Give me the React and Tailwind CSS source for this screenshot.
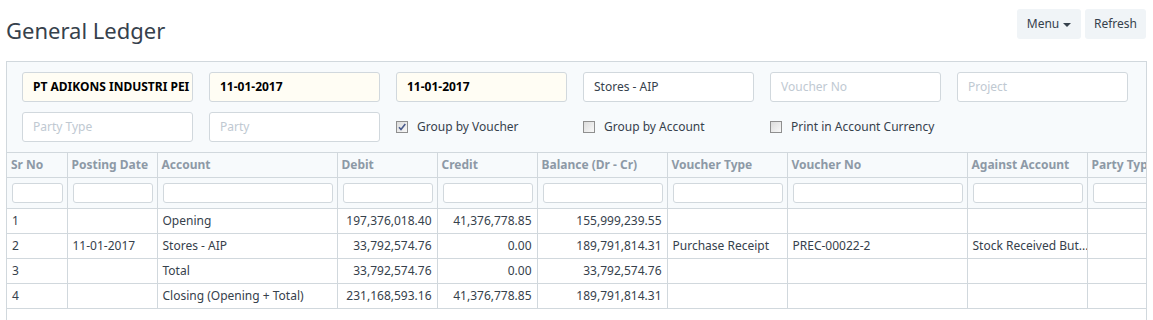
import { Fragment } from 'react';

const columns = [
  { label: 'Sr No', width: 60 },
  { label: 'Posting Date', width: 90 },
  { label: 'Account', width: 180 },
  { label: 'Debit', width: 100, right: true },
  { label: 'Credit', width: 100, right: true },
  { label: 'Balance (Dr - Cr)', width: 130, right: true },
  { label: 'Voucher Type', width: 120 },
  { label: 'Voucher No', width: 180 },
  { label: 'Against Account', width: 120 },
  { label: 'Party Type', width: 120 },
];

const rows = [
  ['1', '', 'Opening', '197,376,018.40', '41,376,778.85', '155,999,239.55', '', '', '', ''],
  ['2', '11-01-2017', 'Stores - AIP', '33,792,574.76', '0.00', '189,791,814.31', 'Purchase Receipt', 'PREC-00022-2', 'Stock Received But...', ''],
  ['3', '', 'Total', '33,792,574.76', '0.00', '33,792,574.76', '', '', '', ''],
  ['4', '', 'Closing (Opening + Total)', '231,168,593.16', '41,376,778.85', '189,791,814.31', '', '', '', ''],
];

function Field({ value, placeholder, filled }) {
  return (
    <div
      className={`flex h-[30px] w-[171px] items-center overflow-hidden whitespace-nowrap rounded-[3px] border border-[#d1d8dd] px-[10px] text-[12px] ${
        filled ? 'bg-[#fffdf4] font-bold text-[#000]' : 'bg-white'
      }`}
    >
      {value ? (
        <span className={filled ? '' : 'text-[#36414c]'}>{value}</span>
      ) : (
        <span className="text-[#c0c9d2]">{placeholder}</span>
      )}
    </div>
  );
}

function Check({ label, checked }) {
  return (
    <div className="flex h-[30px] w-[171px] items-center text-[12px] text-[#36414c]">
      <span className="relative mr-[9px] flex h-[12px] w-[12px] items-center justify-center border border-[#8f8f8f] bg-gradient-to-br from-[#dcdcdc] to-[#f8f8f8]">
        {checked && (
          <svg viewBox="0 0 10 10" className="h-[10px] w-[10px]">
            <path d="M2 5.2 L4 7.5 L8.3 2" fill="none" stroke="#4a5b8c" strokeWidth="1.6" />
          </svg>
        )}
      </span>
      {label}
    </div>
  );
}

export default function App() {
  return (
    <div className="h-[320px] w-[1153px] overflow-hidden bg-white font-['Noto_Sans','Open_Sans',sans-serif] text-[#36414c]">
      <div className="flex h-[61px] items-start justify-between pl-[6px] pr-[7px]">
        <h1 className="mt-[15px] text-[22px] leading-[30px] text-[#36414c]">General Ledger</h1>
        <div className="mt-[9px] flex gap-[4px]">
          <button className="flex h-[30px] w-[64px] items-center justify-center gap-[4px] rounded-[3px] bg-[#f0f4f7] text-[12px] text-[#36414c]">
            Menu
            <span className="mt-[1px] border-x-[4px] border-t-[4px] border-x-transparent border-t-[#36414c]" />
          </button>
          <button className="flex h-[30px] w-[61px] items-center justify-center rounded-[3px] bg-[#f0f4f7] text-[12px] text-[#36414c]">
            Refresh
          </button>
        </div>
      </div>

      <div className="mx-[6px] h-[259px] overflow-hidden border-l border-r border-t border-[#d1d8dd]">
        <div className="flex flex-col gap-[10px] bg-[#f7fafc] px-[15px] pb-[10px] pt-[10px]">
          <div className="flex gap-[16px]">
            <Field value="PT ADIKONS INDUSTRI PEI" filled />
            <Field value="11-01-2017" filled />
            <Field value="11-01-2017" filled />
            <Field value="Stores - AIP" />
            <Field placeholder="Voucher No" />
            <Field placeholder="Project" />
          </div>
          <div className="flex gap-[16px]">
            <Field placeholder="Party Type" />
            <Field placeholder="Party" />
            <Check label="Group by Voucher" checked />
            <Check label="Group by Account" />
            <Check label="Print in Account Currency" />
          </div>
        </div>

        <table className="table-fixed border-collapse text-[12px]" style={{ width: 1200 }}>
          <colgroup>
            {columns.map((c) => (
              <col key={c.label} style={{ width: c.width }} />
            ))}
          </colgroup>
          <thead className="bg-[#f7fafc]">
            <tr className="h-[25px]">
              {columns.map((c, i) => (
                <th
                  key={c.label}
                  className={`overflow-hidden whitespace-nowrap border border-[#d1d8dd] px-[4px] text-left font-bold text-[#8d99a6] ${
                    i === 0 ? 'border-l-0' : ''
                  }`}
                >
                  {c.label}
                </th>
              ))}
            </tr>
            <tr className="h-[31px]">
              {columns.map((c, i) => (
                <th
                  key={c.label}
                  className={`border-x border-[#d1d8dd] pl-[5px] pr-[4px] ${i === 0 ? 'border-l-0' : ''}`}
                >
                  <div className="h-[20px] w-full rounded-[3px] border border-[#d1d8dd] bg-white" />
                </th>
              ))}
            </tr>
          </thead>
          <tbody>
            {rows.map((r, ri) => (
              <tr key={ri} className="h-[25px]">
                {r.map((cell, ci) => (
                  <td
                    key={ci}
                    className={`overflow-hidden whitespace-nowrap border border-[#d1d8dd] px-[5px] text-[#36414c] ${
                      columns[ci].right ? 'text-right' : 'text-left'
                    } ${ci === 0 ? 'border-l-0' : ''}`}
                  >
                    {cell}
                  </td>
                ))}
              </tr>
            ))}
          </tbody>
        </table>
      </div>
    </div>
  );
}
